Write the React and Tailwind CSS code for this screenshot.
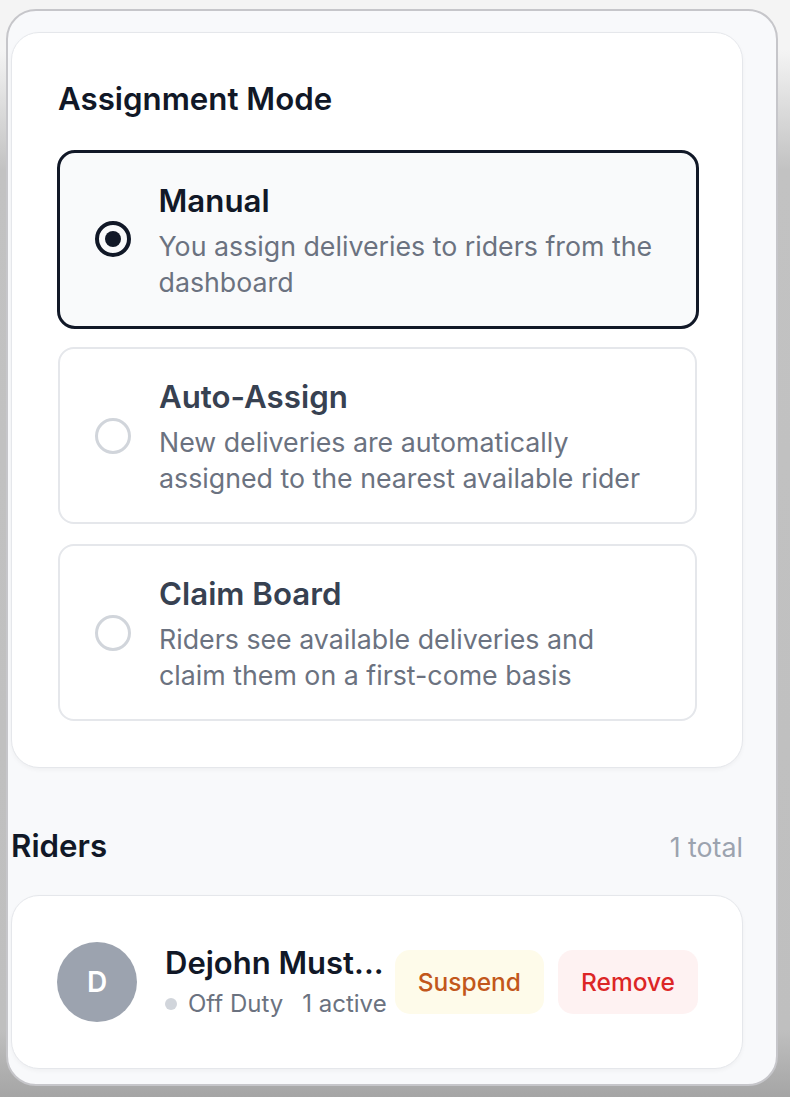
import React from "react";

function Radio({ selected }) {
  if (selected) {
    return (
      <div className="flex h-[36px] w-[36px] shrink-0 items-center justify-center rounded-full border-[4.5px] border-[#111827]">
        <div className="h-[16px] w-[16px] rounded-full bg-[#111827]" />
      </div>
    );
  }
  return <div className="h-[36px] w-[36px] shrink-0 rounded-full border-[3.5px] border-[#d1d5db]" />;
}

function Option({ title, desc, selected }) {
  return (
    <div
      className={
        selected
          ? "-m-[1.5px] flex items-center rounded-[18px] border-[3.5px] border-[#111827] bg-[#f9fafb] px-[35px] py-[26px]"
          : "flex items-center rounded-[16px] border-2 border-[#e5e7eb] bg-white px-[35px] py-[26px]"
      }
    >
      <Radio selected={selected} />
      <div className="ml-[28px] min-w-0 flex-1">
        <div
          className={
            selected
              ? "text-[31.25px] leading-[44px] font-semibold text-[#111827]"
              : "text-[31.25px] leading-[44px] font-semibold text-[#374151]"
          }
        >
          {title}
        </div>
        <div className="mt-[5px] text-[26.75px] leading-[36px] text-[#6b7280]">{desc}</div>
      </div>
    </div>
  );
}

export default function App() {
  return (
    <div className="h-[1097px] w-[790px] overflow-hidden bg-[linear-gradient(to_bottom,#f4f4f4_0px,#f4f4f4_50px,#c2c2c2_170px,#bfbfbf_1030px,#a5a5a5_1097px)] pl-[6px] pt-[9px] font-['Inter',sans-serif]">
      <div className="h-[1077px] w-[772px] overflow-hidden rounded-[30px] border-2 border-[#c6c6ca] bg-[#f8f9fb] pl-[3px] pt-[21px]">
        <div className="w-[732px]">
          <div className="rounded-[28px] border border-[#e5e7eb] bg-white pb-[46px] pl-[46px] pr-[45px] pt-[42px] shadow-[0_2px_4px_rgba(0,0,0,0.04)]">
            <h2 className="mb-[27px] text-[31.25px] leading-[49px] font-semibold text-[#111827]">Assignment Mode</h2>
            <div className="flex flex-col gap-[20px]">
              <Option selected title="Manual" desc="You assign deliveries to riders from the dashboard" />
              <Option title="Auto-Assign" desc="New deliveries are automatically assigned to the nearest available rider" />
              <Option title="Claim Board" desc="Riders see available deliveries and claim them on a first-come basis" />
            </div>
          </div>

          <div className="mt-[56px] flex items-baseline justify-between">
            <h3 className="text-[31.25px] leading-[44px] font-semibold text-[#111827]">Riders</h3>
            <span className="text-[26.75px] leading-[36px] text-[#9ca3af]">1 total</span>
          </div>

          <div className="mt-[27px] flex items-center rounded-[28px] border border-[#e5e7eb] bg-white py-[46px] pl-[45px] pr-[44px] shadow-[0_2px_4px_rgba(0,0,0,0.04)]">
            <div className="flex h-[80px] w-[80px] shrink-0 items-center justify-center rounded-full bg-[#9ca3af] text-[28px] font-semibold text-white">
              D
            </div>
            <div className="ml-[28px] min-w-0 flex-1">
              <div className="whitespace-nowrap text-[31px] leading-[40px] font-semibold text-[#111827]">Dejohn Must...</div>
              <div className="mt-[4px] flex items-center whitespace-nowrap text-[24px] leading-[34px] text-[#6b7280]">
                <span className="mr-[11px] h-[12px] w-[12px] shrink-0 rounded-full bg-[#d1d5db]" />
                <span>Off Duty</span>
                <span className="ml-[19px]">1 active</span>
              </div>
            </div>
            <div className="ml-[13px] flex shrink-0 gap-[14px]">
              <button className="h-[64px] rounded-[15px] bg-[#fefbea] px-[23px] text-[24.5px] font-medium text-[#c2571b]">
                Suspend
              </button>
              <button className="h-[64px] rounded-[15px] bg-[#fef2f2] px-[23px] text-[24.5px] font-medium text-[#dc2626]">
                Remove
              </button>
            </div>
          </div>
        </div>
      </div>
    </div>
  );
}
